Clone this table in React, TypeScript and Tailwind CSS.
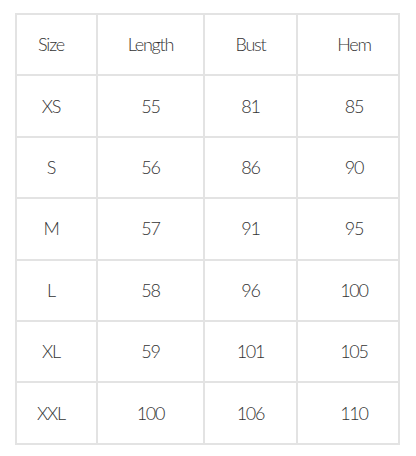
const header = ["Size", "Length", "Bust", "Hem"];

const rows = [
  ["XS", "55", "81", "85"],
  ["S", "56", "86", "90"],
  ["M", "57", "91", "95"],
  ["L", "58", "96", "100"],
  ["XL", "59", "101", "105"],
  ["XXL", "100", "106", "110"],
];

// per-column widths and a small offset on the outer columns
const colClass = [
  "w-[81px] pr-[11px]",
  "w-[107px]",
  "w-[93px]",
  "w-[102px] pl-[12px]",
];

function Row({ cells }: { cells: string[] }) {
  return (
    <div className="flex h-[61.4px]">
      {cells.map((c, i) => (
        <div
          key={i}
          className={`${colClass[i]} flex items-center justify-center border-r-2 border-b-2 border-[#e3e3e3]`}
        >
          {c}
        </div>
      ))}
    </div>
  );
}

export default function App() {
  return (
    <div className="w-[416px] h-[456px] bg-white pt-[13px] pl-[15px]">
      <div
        className="inline-flex flex-col border-l-2 border-t-2 border-[#e3e3e3] text-[18px] font-light text-[#333333] tracking-[-1.2px]"
        style={{ fontFamily: "Lato, 'Noto Sans', sans-serif" }}
      >
        <Row cells={header} />
        {rows.map((r, i) => (
          <Row key={i} cells={r} />
        ))}
      </div>
    </div>
  );
}
